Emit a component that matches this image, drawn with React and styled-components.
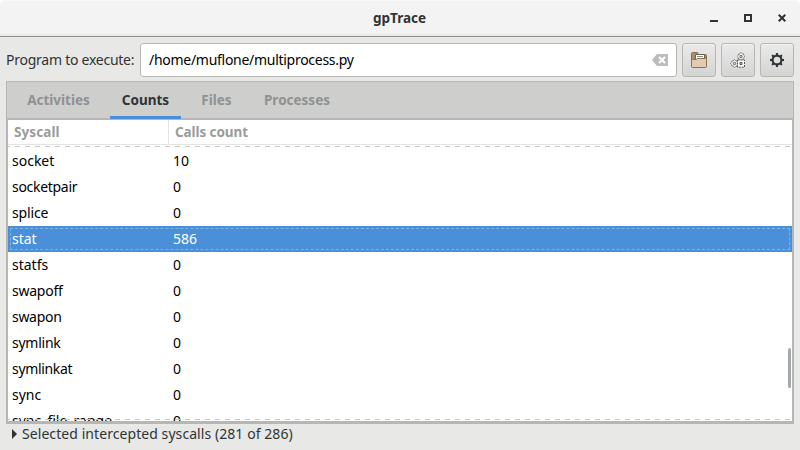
import React from 'react';
import styled, { createGlobalStyle } from 'styled-components';

const GlobalStyle = createGlobalStyle`
  * { box-sizing: border-box; }
  body { margin: 0; background: #fff; overflow: hidden; }
`;

const Window = styled.div`
  width: 800px;
  height: 450px;
  display: flex;
  flex-direction: column;
  overflow: hidden;
  background: #e8e8e7;
  color: #2e3436;
  font: 14px/20px 'Noto Sans', 'Open Sans', sans-serif;
  border-radius: 7px 7px 0 0;
`;

const TitleBar = styled.header`
  height: 37px;
  flex: none;
  display: grid;
  grid-template-columns: 1fr auto 1fr;
  align-items: center;
  background: linear-gradient(#fff 0, #f3f3f3 1px, #f3f3f3 33px, #e9e9e8 35px);
  border-bottom: 1px solid #8f918a;
`;

const Text = styled.span`
  white-space: pre;
  letter-spacing: ${(p) => p.$spacing || 0}px;
`;

const Title = styled.h1`
  grid-column: 2;
  margin: 0 1px 0 0;
  font-size: 13.5px;
  line-height: 20px;
  font-weight: 700;
`;

const WindowControls = styled.div`
  display: flex;
  justify-content: flex-end;
  gap: 18px;
  padding-right: 10px;
  svg { display: block; }
`;

const Toolbar = styled.div`
  flex: none;
  height: 44px;
  display: flex;
  align-items: center;
  padding: 2px 6px 0 6px;
`;

const ProgramLabel = styled.label`
  width: 134px;
  flex: none;
`;

const Entry = styled.div`
  width: 537px;
  height: 34px;
  display: flex;
  align-items: center;
  justify-content: space-between;
  padding: 0 8px;
  background: #fff;
  border: 1px solid #b6b6b3;
  border-radius: 3px;
  color: #000;
  svg { display: block; }
`;

const ToolButton = styled.button`
  width: 34px;
  height: 34px;
  margin-left: 5px;
  padding: 0;
  display: grid;
  place-items: center;
  background: linear-gradient(#eaeaea, #d4d4d3);
  border: 1px solid #b6b6b3;
  border-radius: 3px;
  box-shadow: inset 0 1px #f4f4f4;
  svg { display: block; }
`;

const Notebook = styled.main`
  flex: none;
  margin: 0 6px;
  height: 343px;
  border: 1px solid #b6b6b3;
  border-bottom-width: 2px;
  display: flex;
  flex-direction: column;
`;

const Tabs = styled.nav`
  height: 36px;
  flex: none;
  display: flex;
  gap: 8px;
  padding-left: 8px;
  background: #cececd;
  z-index: 1;
`;

const Tab = styled.div`
  width: ${(p) => p.$width}px;
  height: 37px;
  display: flex;
  justify-content: center;
  padding-top: 8px;
  font-weight: 700;
  font-size: 13.5px;
  color: ${(p) => (p.$active ? '#2e3436' : '#8f9292')};
  border-bottom: 3px solid ${(p) => (p.$active ? '#4a90d9' : 'transparent')};
`;

const Tree = styled.section`
  flex: 1;
  min-height: 0;
  border: solid #b6b6b6;
  border-width: 2px 1px 1px;
  background: #fff;
  color: #000;
  position: relative;
  overflow: hidden;
`;

const HeaderRow = styled.div`
  height: 25px;
  display: grid;
  grid-template-columns: 161px 1fr;
  border-bottom: 1px solid #e4e4e4;
  color: #999c9b;
  font-weight: 700;
  font-size: 13.5px;
  line-height: 24px;
`;

const HeaderCell = styled.div`
  padding-left: 6px;
  &:first-child { border-right: 1px solid #e4e4e4; }
`;

const Rows = styled.div`
  padding-top: 3px;
`;

const Row = styled.div`
  height: 26px;
  display: grid;
  grid-template-columns: 161px 1fr;
  align-items: center;
  padding-left: 4px;
  color: ${(p) => (p.$selected ? '#fff' : '#000')};
  background: ${(p) => (p.$selected ? '#4a90d9' : '#fff')};
  outline: ${(p) => (p.$selected ? '1px dashed #80b1e4' : 'none')};
  outline-offset: -3px;
`;

const Undershoot = styled.div`
  position: absolute;
  left: 0;
  right: 0;
  ${(p) => p.$edge}: ${(p) => p.$offset}px;
  height: 1px;
  background: repeating-linear-gradient(90deg, #c8c8c8 0 2px, transparent 2px 7px, #c8c8c8 7px 10px);
`;

const ScrollThumb = styled.div`
  position: absolute;
  top: 228px;
  right: 1px;
  width: 3px;
  height: 40px;
  border-radius: 2px;
  background: #a5a9a9;
`;

const Expander = styled.footer`
  flex: 1;
  display: flex;
  align-items: flex-start;
  padding-left: 11px;
  svg { margin: 5px 4px 0 0; }
`;

const calls = [
  ['socket', 10], ['socketpair', 0, -0.3], ['splice', 0, -0.15], ['stat', 586],
  ['statfs', 0], ['swapoff', 0, -0.25], ['swapon', 0, -0.3], ['symlink', 0, -0.25],
  ['symlinkat', 0, -0.33], ['sync', 0], ['sync_file_range', 0],
];

const tabs = [['Activities', 87], ['Counts', 71], ['Files', 55], ['Processes', 90]];

const Gear = () => (
  <svg width="16" height="16" viewBox="0 0 16 16">
    <circle cx="8" cy="8" r="4.4" fill="none" stroke="#2e3436" strokeWidth="2.1" />
    {Array.from({ length: 8 }, (_, i) => (
      <path key={i} d="M6.7 3.6 7.1 1h1.8l.4 2.6z" fill="#2e3436" transform={`rotate(${i * 45} 8 8)`} />
    ))}
  </svg>
);

const Folder = () => (
  <svg width="16" height="16" viewBox="0 0 16 16">
    <path d="M.5 14V1.5q0-1 1-1H6q1 0 1 1v1h7.5q1 0 1 1V14z" fill="#a8906f" stroke="#86704f" />
    <path d="M4.5 2.5h9V8h-9z" fill="#fff" stroke="#6f6149" />
    <path d="M6 4.5h6" stroke="#8c8f8c" />
    <path d="M.5 14.5v-6q0-1 1-1H5l1.5-1h8q1 0 1 1v7q0 1-1 1h-13q-1 0-1-1z" fill="#e1ccb1" stroke="#8a7252" />
  </svg>
);

const SmallGear = ({ x, y }) => (
  <g transform={`translate(${x} ${y})`}>
    <path d="m0-4 1.3 1.4h1.3v1.3L4 0 2.6 1.3v1.3H1.3L0 4l-1.3-1.4h-1.3V1.3L-4 0l1.4-1.3v-1.3h1.3z" fill="#f4f4f3" stroke="#555753" strokeWidth=".9" strokeDasharray="1.6 .7" />
    <circle r="1.2" fill="#dededd" stroke="#555753" strokeWidth=".9" />
  </g>
);

const Process = () => (
  <svg width="16" height="16" viewBox="0 0 16 16">
    <SmallGear x={11} y={4.5} />
    <SmallGear x={4.5} y={11.5} />
    <path d="M7.5 8h7v7.2h-7z" fill="#f8f8f8" stroke="#555753" strokeDasharray="2 1" />
    <path d="M10 10.5h2v2h-2z" fill="#dededd" stroke="#555753" />
  </svg>
);

export default function App() {
  return (
    <Window>
      <GlobalStyle />
      <TitleBar>
        <Title><Text>gpTrace</Text></Title>
        <WindowControls>
          <svg width="16" height="16"><path d="M4 10h8v2H4z" fill="#2e3436" /></svg>
          <svg width="16" height="16"><path d="M5 5h6v6H5z" fill="none" stroke="#2e3436" strokeWidth="2" /></svg>
          <svg width="16" height="16"><path d="m4.7 4.7 6.6 6.6m0-6.6-6.6 6.6" stroke="#2e3436" strokeWidth="2" /></svg>
        </WindowControls>
      </TitleBar>
      <Toolbar>
        <ProgramLabel><Text $spacing={-0.25}>Program to execute:</Text></ProgramLabel>
        <Entry>
          <Text $spacing={-0.28}>/home/muflone/multiprocess.py</Text>
          <svg width="16" height="16"><path d="M0 8 5 2h11v12H5z" fill="#babdb9" /><path d="m7 5 6 6m0-6-6 6" stroke="#fff" strokeWidth="2" /></svg>
        </Entry>
        <ToolButton aria-label="Open"><Folder /></ToolButton>
        <ToolButton aria-label="Execute"><Process /></ToolButton>
        <ToolButton aria-label="Settings"><Gear /></ToolButton>
      </Toolbar>
      <Notebook>
        <Tabs>
          {tabs.map(([name, width]) => (
            <Tab key={name} $width={width} $active={name === 'Counts'}><Text>{name}</Text></Tab>
          ))}
        </Tabs>
        <Tree>
          <HeaderRow>
            <HeaderCell><Text $spacing={0.1}>Syscall</Text></HeaderCell>
            <HeaderCell><Text $spacing={-0.08}>Calls count</Text></HeaderCell>
          </HeaderRow>
          <Rows>
            {calls.map(([name, count, spacing]) => (
              <Row key={name} $selected={name === 'stat'}><Text $spacing={spacing}>{name}</Text><Text>{count}</Text></Row>
            ))}
          </Rows>
          <Undershoot $edge="top" $offset={26} />
          <Undershoot $edge="bottom" $offset={1} />
          <ScrollThumb />
        </Tree>
      </Notebook>
      <Expander>
        <svg width="7" height="10"><path d="M1 0v10l5-5z" fill="#2e3436" /></svg>
        <Text $spacing={0.07}>Selected intercepted syscalls (281 of 286)</Text>
      </Expander>
    </Window>
  );
}
